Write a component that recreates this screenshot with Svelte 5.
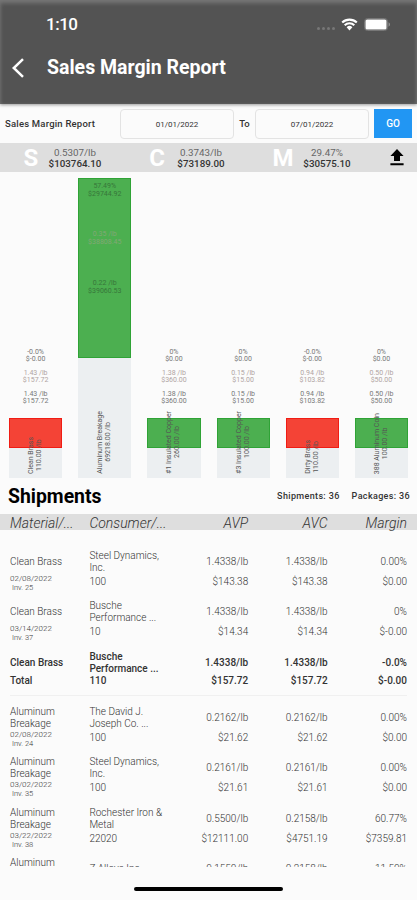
<script>
  const summary = [
    { letter: "S", rate: "0.5307/lb", total: "$103764.10" },
    { letter: "C", rate: "0.3743/lb", total: "$73189.00" },
    { letter: "M", rate: "29.47%", total: "$30575.10" },
  ];

  const bars = [
    { name: "Clean Brass", weight: "110.00 /lb", margin: ["-0.0%", "$-0.00"], cost: ["1.43 /lb", "$157.72"], price: ["1.43 /lb", "$157.72"], loss: true },
    { name: "Aluminum Breakage", weight: "69218.00 /lb", margin: ["57.49%", "$29744.92"], cost: ["0.35 /lb", "$38808.45"], price: ["0.22 /lb", "$39060.53"], tall: true },
    { name: "#1 Insulated Copper", weight: "260.00 /lb", margin: ["0%", "$0.00"], cost: ["1.38 /lb", "$360.00"], price: ["1.38 /lb", "$360.00"] },
    { name: "#3 Insulated Copper", weight: "100.00 /lb", margin: ["0%", "$0.00"], cost: ["0.15 /lb", "$15.00"], price: ["0.15 /lb", "$15.00"] },
    { name: "Dirty Brass", weight: "110.00 /lb", margin: ["-0.0%", "$-0.00"], cost: ["0.94 /lb", "$103.82"], price: ["0.94 /lb", "$103.82"], loss: true },
    { name: "388 Aluminum Coin", weight: "100.00 /lb", margin: ["0%", "$0.00"], cost: ["0.50 /lb", "$50.00"], price: ["0.50 /lb", "$50.00"] },
  ];

  const columns = ["Material/...", "Consumer/...", "AVP", "AVC", "Margin"];

  const rows = [
    { material: ["Clean Brass"], consumer: ["Steel Dynamics,", "Inc."], date: "02/08/2022", inv: "Inv. 25", weight: "100", rates: ["1.4338/lb", "1.4338/lb", "0.00%"], totals: ["$143.38", "$143.38", "$0.00"] },
    { material: ["Clean Brass"], consumer: ["Busche", "Performance ..."], date: "03/14/2022", inv: "Inv. 37", weight: "10", rates: ["1.4338/lb", "1.4338/lb", "0%"], totals: ["$14.34", "$14.34", "$-0.00"] },
    { material: ["Clean Brass"], consumer: ["Busche", "Performance ..."], weight: "110", rates: ["1.4338/lb", "1.4338/lb", "-0.0%"], totals: ["$157.72", "$157.72", "$-0.00"], total: true },
    { material: ["Aluminum", "Breakage"], consumer: ["The David J.", "Joseph Co. ..."], date: "02/08/2022", inv: "Inv. 24", weight: "100", rates: ["0.2162/lb", "0.2162/lb", "0.00%"], totals: ["$21.62", "$21.62", "$0.00"] },
    { material: ["Aluminum", "Breakage"], consumer: ["Steel Dynamics,", "Inc."], date: "03/02/2022", inv: "Inv. 35", weight: "100", rates: ["0.2161/lb", "0.2161/lb", "0.00%"], totals: ["$21.61", "$21.61", "$0.00"] },
    { material: ["Aluminum", "Breakage"], consumer: ["Rochester Iron &", "Metal"], date: "03/22/2022", inv: "Inv. 38", weight: "22020", rates: ["0.5500/lb", "0.2158/lb", "60.77%"], totals: ["$12111.00", "$4751.19", "$7359.81"] },
    { material: ["Aluminum", ""], consumer: ["Z Alloys Inc"], rates: ["0.1550/lb", "0.2158/lb", "11.50%"] },
  ];
</script>

<div class="screen">
  <header>
    <div class="status">
      <span class="time">1:10</span>
      <span class="dots"><i></i><i></i><i></i><i></i></span>
      <svg class="wifi" width="17" height="13" viewBox="0 0 17 13">
        <path d="M1.2 4.6a10.4 10.4 0 0 1 14.6 0M3.7 7.2a6.8 6.8 0 0 1 9.6 0" fill="none" stroke="#fff" stroke-width="2.1" />
        <path d="M8.5 12.4 5.6 9.3a4.1 4.1 0 0 1 5.8 0z" fill="#fff" />
      </svg>
      <svg class="battery" width="27" height="13" viewBox="0 0 27 13">
        <rect x="0.5" y="0.5" width="23" height="12" rx="3" fill="none" stroke="#777" />
        <rect x="1.5" y="1.5" width="21" height="10" rx="1.6" fill="#fff" />
        <path d="M24.6 4.3v4.4c1.8-.8 1.8-3.6 0-4.4z" fill="#999" />
      </svg>
    </div>
    <div class="nav">
      <svg width="14" height="20" viewBox="0 0 14 20">
        <path d="M12 1.2 2.8 10l9.2 8.8" fill="none" stroke="#fff" stroke-width="2.5" />
      </svg>
      <h1>Sales Margin Report</h1>
    </div>
  </header>

  <section class="filter">
    <span class="label">Sales Margin Report</span>
    <div class="date">01/01/2022</div>
    <span class="to">To</span>
    <div class="date">07/01/2022</div>
    <button>GO</button>
  </section>

  <section class="summary">
    {#each summary as item}
      <div class="item">
        <b class="letter">{item.letter}</b>
        <div class="figures">
          <span>{item.rate}</span>
          <b>{item.total}</b>
        </div>
      </div>
    {/each}
    <svg width="14" height="17" viewBox="0 0 14 17">
      <path d="M7 0 .4 7H4v5h6V7h3.6zM.4 14.2h13.2v2H.4z" fill="#000" />
    </svg>
  </section>

  <section class="chart">
    {#each bars as bar}
      <div class="bar" class:tall={bar.tall}>
        <div class="values">
          <p>{bar.margin[0]}<br />{bar.margin[1]}</p>
          <p class="cost">{bar.cost[0]}<br />{bar.cost[1]}</p>
          <p>{bar.price[0]}<br />{bar.price[1]}</p>
        </div>
        <div class="fill" class:loss={bar.loss}></div>
        <div class="base"></div>
        <div class="name">{bar.name}<br />{bar.weight}</div>
      </div>
    {/each}
  </section>

  <section class="heading">
    <h2>Shipments</h2>
    <span>Shipments: 36</span>
    <span>Packages: 36</span>
  </section>

  <div class="columns">
    {#each columns as column}
      <span>{column}</span>
    {/each}
  </div>

  <div class="list">
    {#each rows as row}
      <div class="row" class:total={row.total}>
        <div class="cell">
          <div class="top">
            {#each row.material as line}<span>{line}</span>{/each}
          </div>
          {#if row.total}
            <span class="bottom">Total</span>
          {:else if row.date}
            <div class="shipped">
              <span>{row.date}</span>
              <span class="inv">{row.inv}</span>
            </div>
          {/if}
        </div>
        <div class="cell">
          <div class="top">
            {#each row.consumer as line}<span>{line}</span>{/each}
          </div>
          {#if row.weight}
            <span class="bottom">{row.weight}</span>
          {/if}
        </div>
        {#each row.rates as rate, i}
          <div class="cell number">
            <div class="top"><span>{rate}</span></div>
            {#if row.totals}
              <span class="bottom">{row.totals[i]}</span>
            {/if}
          </div>
        {/each}
      </div>
    {/each}
  </div>

  <footer><div class="home"></div></footer>
</div>

<style>
  :global(body) {
    background: #fbfbfb;
  }

  .screen {
    display: flex;
    flex-direction: column;
    width: 417px;
    height: 900px;
    overflow: hidden;
    font-family: Roboto, "Liberation Sans", sans-serif;
    color: #333;
    background: #fbfbfb;
  }

  h1,
  h2,
  p {
    margin: 0;
  }

  header {
    flex: none;
    height: 104px;
    box-sizing: border-box;
    color: #fff;
    background: #535353;
    box-shadow: inset 0 3px 4px #777, inset 0 0 3px #666, 0 1px 3px #999;
  }

  .status {
    display: flex;
    align-items: center;
    height: 48px;
    padding: 0 26px 0 46px;
  }

  .time {
    flex: 1;
    font-size: 17px;
    font-weight: 500;
    letter-spacing: -0.5px;
  }

  .dots {
    display: flex;
    gap: 2px;
    margin: 8px 6px 0 0;
  }

  .dots i {
    width: 3px;
    height: 3px;
    border-radius: 50%;
    background: #777;
  }

  .battery {
    margin-left: 6px;
  }

  .nav {
    display: flex;
    align-items: center;
    height: 39px;
    padding-left: 11px;
  }

  h1 {
    margin-left: 22px;
    font-size: 19.5px;
    font-weight: 700;
  }

  .filter {
    display: flex;
    flex: none;
    align-items: center;
    height: 39px;
    padding: 0 5px;
    font-size: 9.5px;
    font-weight: 500;
  }

  .label {
    width: 115px;
    letter-spacing: 0.2px;
    white-space: nowrap;
  }

  .date {
    width: 114px;
    height: 30px;
    box-sizing: border-box;
    border: 1px solid #e3e3e3;
    border-radius: 4px;
    font-size: 8px;
    font-weight: 400;
    line-height: 29px;
    text-align: center;
  }

  .to {
    width: 21px;
    text-align: center;
  }

  button {
    width: 38px;
    height: 29px;
    margin-left: auto;
    padding: 0;
    border: 0;
    font: 500 10px Roboto, sans-serif;
    color: #fff;
    background: #2196f3;
  }

  .summary {
    display: flex;
    flex: none;
    align-items: center;
    height: 29px;
    padding-left: 18px;
    background: #dedede;
  }

  .item {
    display: flex;
    align-items: center;
    width: 126px;
  }

  .letter {
    width: 26px;
    font-size: 24px;
    line-height: 28px;
    text-align: center;
    color: #fff;
  }

  .figures {
    display: flex;
    flex-direction: column;
    align-items: center;
    width: 62px;
    font-size: 9.8px;
    line-height: 11px;
    color: #666;
  }

  .figures b {
    font-weight: 500;
    color: #333;
  }

  .summary svg {
    margin-left: -6px;
  }

  .chart {
    display: flex;
    flex: none;
    gap: 16px;
    align-items: flex-end;
    height: 306px;
    padding: 0 9px;
  }

  .bar {
    position: relative;
    display: flex;
    flex: 1;
    flex-direction: column;
  }

  .values {
    display: flex;
    flex-direction: column;
    gap: 5.5px;
    margin-bottom: 12px;
    font-size: 7px;
    line-height: 7.7px;
    text-align: center;
    color: #777;
  }

  .values .cost {
    color: #b0a4a2;
  }

  .fill {
    height: 30px;
    box-sizing: border-box;
    border: 1px solid #2fa336;
    background: #4caf50;
  }

  .fill.loss {
    border-color: #f01c14;
    background: #f44336;
  }

  .base {
    height: 30px;
    background: #eceff1;
  }

  .tall .fill {
    height: 180px;
  }

  .tall .base {
    height: 120px;
  }

  /* the tall bar carries its figures inside the fill */
  .tall .values {
    position: absolute;
    top: 5px;
    left: 0;
    right: 0;
    gap: 33px;
    color: #37763a;
  }

  .tall .values .cost {
    color: #82a876;
  }

  .name {
    position: absolute;
    bottom: 4px;
    left: 18px;
    writing-mode: vertical-rl;
    transform: rotate(180deg);
    font-size: 7px;
    line-height: 8px;
    text-align: center;
    white-space: nowrap;
    color: #555;
  }

  .heading {
    display: flex;
    flex: none;
    align-items: center;
    gap: 12px;
    height: 36px;
    padding: 0 7px 0 8px;
    font-size: 9px;
    font-weight: 500;
    letter-spacing: 0.35px;
  }

  h2 {
    flex: 1;
    padding-top: 1px;
    font-size: 19.4px;
    font-weight: 700;
    letter-spacing: 0;
    color: #000;
  }

  .columns,
  .row {
    display: grid;
    grid-template-columns: repeat(5, 1fr);
    padding: 0 10px;
  }

  .columns {
    flex: none;
    height: 16px;
    font-size: 14px;
    font-style: italic;
    font-weight: 300;
    line-height: 18px;
    background: #dedede;
  }

  .columns span:nth-child(n + 3) {
    text-align: right;
  }

  .list {
    flex: none;
    height: 318px;
    box-sizing: border-box;
    height: 337px;
    padding-top: 19.5px;
    overflow: hidden;
    font-size: 10px;
    font-weight: 300;
    line-height: 12px;
  }

  .row {
    height: 50.5px;
  }

  .cell,
  .top,
  .shipped {
    display: flex;
    flex-direction: column;
    white-space: nowrap;
  }

  .top {
    justify-content: center;
    height: 24px;
  }

  .top span {
    min-height: 12px;
  }

  .bottom {
    margin-top: 2px;
  }

  .number {
    text-align: right;
  }

  .shipped {
    font-size: 8px;
    line-height: 9px;
  }

  .inv {
    padding-left: 2px;
    font-size: 7.5px;
  }

  .row.total {
    height: 45px;
    margin: 0 10px 10px;
    padding: 0;
    box-sizing: border-box;
    border-bottom: 1px solid #f0f0f0;
    font-weight: 500;
  }

  .row.total .bottom {
    margin-top: 0;
  }

  footer {
    display: flex;
    flex: 1;
    justify-content: center;
    align-items: flex-start;
    padding-top: 20px;
  }

  .home {
    width: 149px;
    height: 4px;
    border-radius: 2px;
    background: #000;
  }
</style>
